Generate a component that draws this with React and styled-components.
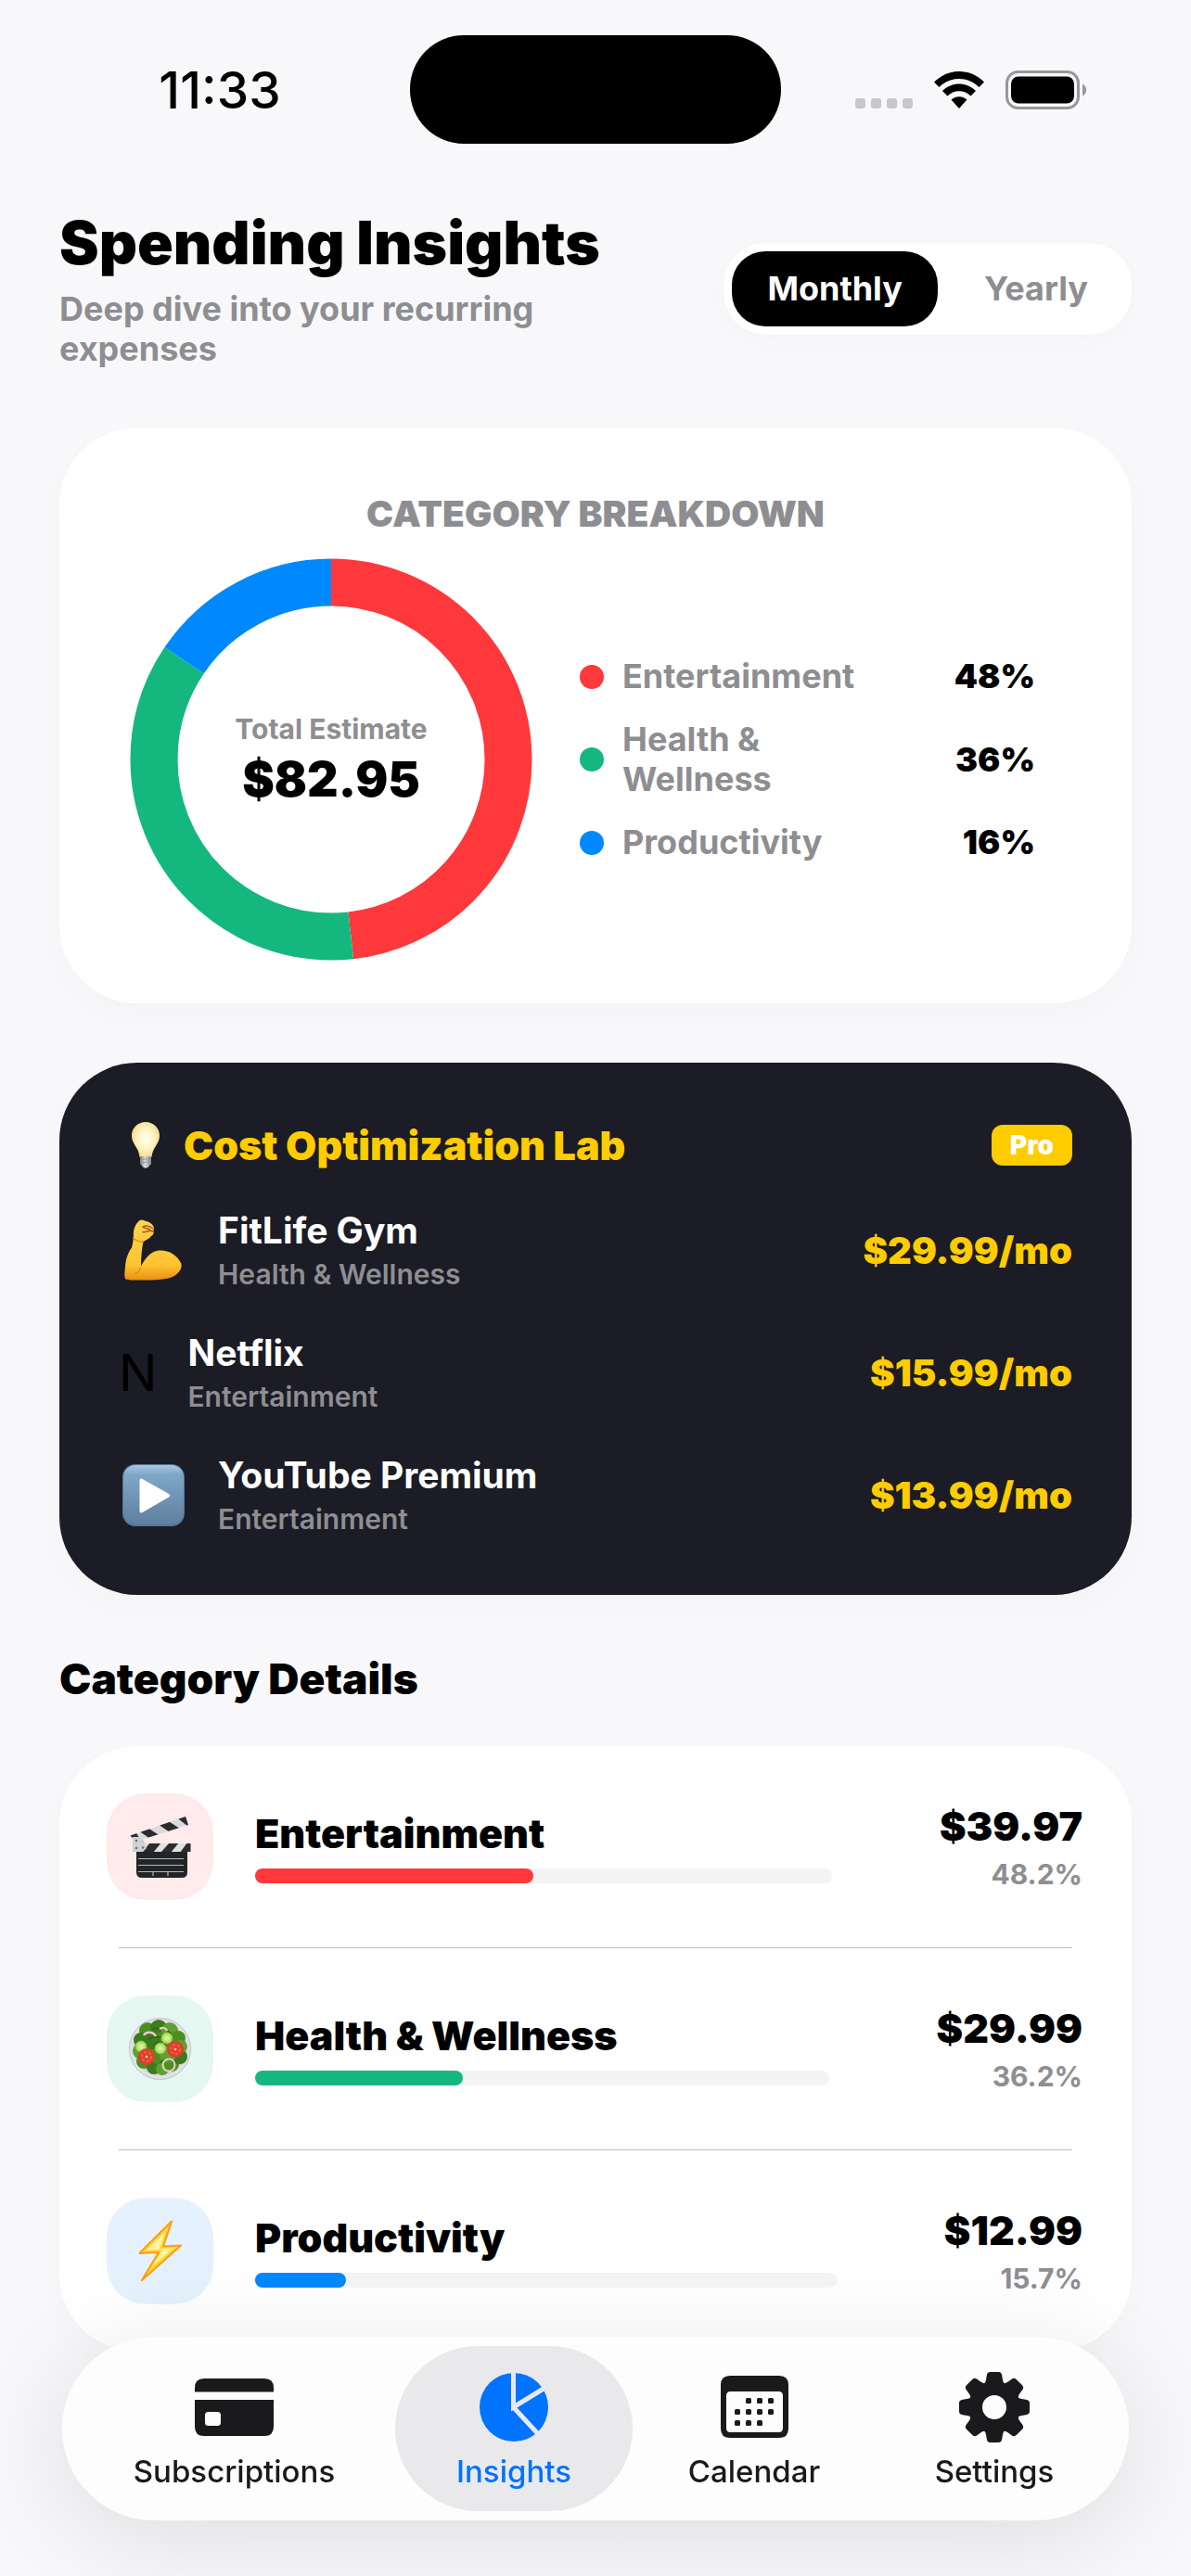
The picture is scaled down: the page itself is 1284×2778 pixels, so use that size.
import React, { useState } from 'react';
import styled, { createGlobalStyle, css } from 'styled-components';

const colors = {
    bg: '#f8f8fa',
    white: '#ffffff',
    black: '#000000',
    grey: '#8e8e92',
    line: '#bfbfc2',
    track: '#f4f4f5',
    dark: '#1b1c25',
    yellow: '#ffcc00',
    red: '#ff383c',
    green: '#14b87f',
    blue: '#0088ff',
    tabActive: '#0073ff',
    tabText: '#1a1a1c',
    pill: '#e9e9eb',
};

const setFlex = ({ x = 'center', y = 'center' } = {}) => css`
    display: flex;
    justify-content: ${x};
    align-items: ${y};
`;

const GlobalStyle = createGlobalStyle`
    *{
        box-sizing: border-box;
    }

    body{
        margin: 0;
        min-height: 100vh;
        background: ${colors.bg};
        color: ${colors.black};
        font-family: Inter, "Liberation Sans", sans-serif;
    }

    h1, h2, h3, p, ul{
        margin: 0;
        padding: 0;
    }

    ul{
        list-style: none;
    }

    svg{
        display: block;
        flex: none;
    }
`;

/* ---------- data ---------- */

const categories = [
    { name: 'Entertainment', amount: '$39.97', percent: 48.2, color: colors.red, tint: '#ffebec', icon: 'clapper' },
    { name: 'Health & Wellness', amount: '$29.99', percent: 36.2, color: colors.green, tint: '#e6f7f1', icon: 'salad' },
    { name: 'Productivity', amount: '$12.99', percent: 15.7, color: colors.blue, tint: '#e5f2fe', icon: 'bolt' },
];

const costs = [
    { name: 'FitLife Gym', category: 'Health & Wellness', price: '$29.99/mo', icon: 'arm' },
    { name: 'Netflix', category: 'Entertainment', price: '$15.99/mo', letter: 'N' },
    { name: 'YouTube Premium', category: 'Entertainment', price: '$13.99/mo', icon: 'play' },
];

/* ---------- pictograms ---------- */

const Bulb = () => (
    <svg width="30" height="50" viewBox="0 0 30 50" aria-hidden="true">
        <defs>
            <radialGradient id="glass" cx="50%" cy="48%" r="55%">
                <stop offset="0" stopColor="#fffef2" />
                <stop offset="0.5" stopColor="#fff4c4" />
                <stop offset="1" stopColor="#f3d98a" />
            </radialGradient>
            <linearGradient id="cap" x1="0" x2="1" y1="0" y2="0">
                <stop offset="0" stopColor="#7c7c7c" />
                <stop offset="0.45" stopColor="#dcdcdc" />
                <stop offset="1" stopColor="#858585" />
            </linearGradient>
        </defs>
        <path d="M15 0C6.500 0 0 6.500 0 14.500C0 20 2.600 23.500 5 27.500C7.400 31.500 8 34 8.600 38H21.400C22 34 22.600 31.500 25 27.500C27.400 23.500 30 20 30 14.500C30 6.500 23.500 0 15 0Z" fill="url(#glass)" />
        <path d="M9 37H21V45L18 48.500C17 50 13 50 12 48.500L9 45Z" fill="url(#cap)" />
        <path d="M9 40.500L21 39.500M9 43.800L21 42.800" stroke="#8a8a8a" strokeWidth="0.8" />
    </svg>
);

const Arm = () => (
    <svg width="62" height="66" viewBox="0 0 62 66" aria-hidden="true">
        <defs>
            <linearGradient id="skin" x1="0" x2="0" y1="0" y2="1">
                <stop offset="0" stopColor="#ffd352" />
                <stop offset="0.75" stopColor="#ffc32f" />
                <stop offset="1" stopColor="#e98f12" />
            </linearGradient>
        </defs>
        <path d="M16 1.500C18.500 -0.500 21 0.500 23 2C26 2 30 4.500 31.500 7.500C32.500 9.500 31 11 31.500 13C32 15 31 17 29 18C27 21 23 22.500 20.500 24C19 31 18 40 18 50.500C22 43 28 34.500 37 33.500C47 32.500 57 38 61 47C63 52 60 57 54 61C48 64.500 36 65.500 24 65.500C15 65.500 7 66 1.500 64.500C-0.500 62 0.500 57 1 51C1.800 42 4 36 8 30.500C9 27 9.500 23 10 19C9.500 15 10 11 11.500 8C12.500 5 14 3.500 16 1.500Z" fill="url(#skin)" />
        <path d="M17.500 52C17 56 14 57.500 11.500 58.500M9.500 20C13 23.500 17 24.500 21 23.500" fill="none" stroke="#dd9218" strokeWidth="1.500" strokeLinecap="round" />
        <path d="M20 8C23 6.500 27 7 30.500 9.500M20.500 8.500C22 10 26 9.500 28 11.500M20 13.500C23 14.500 25 12 27 12.500M27.500 12L31 13" fill="none" stroke="#a85a10" strokeWidth="1.500" strokeLinecap="round" />
    </svg>
);

const Play = () => (
    <svg width="67" height="67" viewBox="0 0 67 67" aria-hidden="true">
        <defs>
            <linearGradient id="tile" x1="0" x2="0" y1="0" y2="1">
                <stop offset="0" stopColor="#a9c9e2" />
                <stop offset="0.16" stopColor="#7fa6c8" />
                <stop offset="1" stopColor="#5f7f9e" />
            </linearGradient>
        </defs>
        <rect width="67" height="67" rx="14" fill="#557694" />
        <rect x="1" y="1" width="65" height="64" rx="13" fill="url(#tile)" />
        <path d="M18.500 17.500C18.500 15.600 20 15 21.600 16L50 32C51.600 33 51.600 34.600 50 35.600L21.600 52C20 53 18.500 52.400 18.500 50.500Z" fill="#fff" />
    </svg>
);

const Clapper = () => (
    <svg width="66" height="66" viewBox="0 0 66 66" aria-hidden="true">
        <defs>
            <clipPath id="upper"><path d="M0.500 20.500L60 0L63 9L6 27Z" /></clipPath>
            <clipPath id="lower"><path d="M4 29H65.500V38H4Z" /></clipPath>
        </defs>
        <path d="M3 26L12 22L18 31L14 38H3Z" fill="#c4c7ca" />
        <g clipPath="url(#upper)">
            <rect width="66" height="30" fill="#d9dbdd" />
            <path d="M-2 18L6 16L13 28L2 30ZM9 15L19 12L33 21L22 24ZM30 8L40 4L54 13L43 17ZM49 0L62 -4L68 10L62 10Z" fill="#2b2c2e" />
        </g>
        <path d="M7 37H62V60Q62 66 56 66H13Q7 66 7 60Z" fill="#232425" />
        <g clipPath="url(#lower)">
            <rect x="3" y="28" width="63" height="11" fill="#dfe0e1" />
            <path d="M3 28H8L3 38ZM22 28H34L25 39H13ZM43 28H53L44 39H33ZM62 28H68V39H54Z" fill="#2b2c2e" />
        </g>
        <path d="M3 22V38H14L18 34L10 22Z" fill="#cfd2d4" />
        <circle cx="7" cy="26" r="1.300" fill="#6b6e70" />
        <circle cx="7" cy="34" r="1.300" fill="#6b6e70" />
        <circle cx="14" cy="33.500" r="1.300" fill="#6b6e70" />
        <path d="M9 45.500H58M9 52.500H58M9 59.500H58M25 60V64M41 60V64" stroke="#b5b7b8" strokeWidth="1.200" />
    </svg>
);

const leaves = [
    [20, 14, 9], [32, 11, 9], [44, 14, 9], [53, 22, 8], [13, 24, 8], [12, 36, 8], [16, 47, 8],
    [27, 53, 8], [36, 55, 7], [46, 50, 8], [55, 42, 8], [56, 31, 7], [33, 33, 17], [25, 25, 9], [42, 40, 9],
];

const Salad = () => (
    <svg width="67" height="67" viewBox="0 0 67 67" aria-hidden="true">
        <circle cx="33.500" cy="33.500" r="33" fill="#dfe3e6" stroke="#bcc1c4" />
        <circle cx="33.500" cy="33.500" r="29" fill="#cfd5d8" />
        {leaves.map(([cx, cy, r], i) => (
            <circle key={i} cx={cx} cy={cy} r={r} fill={['#4b8f22', '#3c7a1b', '#5ca22c'][i % 3]} />
        ))}
        <path d="M20 24C28 18 38 20 42 28M34 48C38 44 46 44 50 50M26 12C34 10 42 12 46 18M26 30C30 26 36 24 40 30" fill="none" stroke="#2f6713" strokeWidth="1.500" />
        <path d="M16 19C18 15 26 14 29 20M33 12C36 10 40 11 41 14" fill="none" stroke="#eec4cf" strokeWidth="2.500" />
        {[[13, 31], [34, 33], [41, 22]].map(([cx, cy]) => (
            <g key={cx}>
                <circle cx={cx} cy={cy} r="6" fill="#b4e06c" stroke="#7fbf3a" />
                <circle cx={cx} cy={cy} r="3" fill="#d3f099" />
            </g>
        ))}
        {[[19, 42, 9], [50, 34, 9]].map(([cx, cy, r]) => (
            <g key={cx}>
                <circle cx={cx} cy={cy} r={r} fill="#df3f2a" />
                <circle cx={cx} cy={cy} r={r - 4} fill="none" stroke="#ec6547" strokeWidth="2" strokeDasharray="3 2" />
                <circle cx={cx} cy={cy} r="1.300" fill="#ffcfae" />
            </g>
        ))}
        <circle cx="43" cy="51" r="6.500" fill="none" stroke="#ecd0d2" strokeWidth="2" />
    </svg>
);

const Bolt = () => (
    <svg width="48" height="67" viewBox="0 0 48 67" aria-hidden="true">
        <path d="M36 1.500L1.500 35.800L22 35L4 65L46 27.500L27 28.500Z" fill="#ffd93b" stroke="#ff9d16" strokeWidth="2.200" strokeLinejoin="round" />
        <path d="M29 13L9 32.500L27 31.500L15 50L38 30.500L22.500 31.500Z" fill="#fff3a6" />
    </svg>
);

const pictograms = { bulb: Bulb, arm: Arm, play: Play, clapper: Clapper, salad: Salad, bolt: Bolt };

const WifiIcon = () => (
    <svg width="54" height="40" viewBox="0 0 54 40" aria-hidden="true">
        <path d="M0 11.500C15 -3.800 39 -3.800 54 11.500L48.500 17C36.500 5 17.500 5 5.500 17Z" />
        <path d="M9 21C19 11 35 11 45 21L39.500 26.500C32.500 19.500 21.500 19.500 14.500 26.500Z" />
        <path d="M18.500 30.500C23.500 26 30.500 26 35.500 30.500L27 40Z" />
    </svg>
);

const BatteryIcon = () => (
    <svg width="88" height="42" viewBox="0 0 88 42" aria-hidden="true">
        <rect x="1.500" y="1.500" width="77" height="39" rx="12" fill="none" stroke="#98989a" strokeWidth="3" />
        <rect x="6" y="6.500" width="68" height="29" rx="8" />
        <path d="M83 14.500C88.500 17 88.500 25 83 27.500Z" fill="#98989a" />
    </svg>
);

const SignalDots = () => (
    <svg width="62" height="11" viewBox="0 0 62 11" fill="#c7c7c9" aria-hidden="true">
        {[0, 17, 34, 51].map((x) => <rect key={x} x={x} width="11" height="11" rx="3" />)}
    </svg>
);

const CardIcon = () => (
    <svg width="85" height="76" viewBox="0 0 85 76" fill="currentColor" aria-hidden="true">
        <path d="M0 21.500V17Q0 7 10 7H75Q85 7 85 17V21.500Z" />
        <path fillRule="evenodd" d="M0 30H85V59Q85 69 75 69H10Q0 69 0 59ZM14.500 43Q11 43 11 46.500V54.500Q11 58 14.500 58H24.500Q28 58 28 54.500V46.500Q28 43 24.500 43Z" />
    </svg>
);

const PieIcon = () => (
    <svg width="76" height="76" viewBox="0 0 76 76" aria-hidden="true">
        <circle cx="38" cy="38" r="37" fill="currentColor" />
        <path d="M37.500 0V38L74 15.500M37.500 38L67 70" fill="none" stroke={colors.pill} strokeWidth="5" />
    </svg>
);

const calendarDots = [[30, 27], [42, 27], [54, 27], [18, 39], [30, 39], [42, 39], [54, 39], [18, 51], [30, 51], [42, 51]];

const CalendarIcon = () => (
    <svg width="73" height="76" viewBox="0 -4 73 76" fill="currentColor" aria-hidden="true">
        <path fillRule="evenodd" d="M10 0H63Q73 0 73 10V57Q73 67 63 67H10Q0 67 0 57V10Q0 0 10 0ZM10.500 17Q6 17 6 21.500V56.500Q6 61 10.500 61H62.500Q67 61 67 56.500V21.500Q67 17 62.500 17Z" />
        {calendarDots.map(([x, y]) => <rect key={`${x}-${y}`} x={x - 3} y={y - 3} width="6" height="6" rx="1.500" />)}
    </svg>
);

const GearIcon = () => (
    <svg width="76" height="76" viewBox="-38 -38 76 76" fill="currentColor" aria-hidden="true">
        <circle r="20.500" fill="none" stroke="currentColor" strokeWidth="15" />
        {[0, 45, 90, 135, 180, 225, 270, 315].map((a) => (
            <path key={a} transform={`rotate(${a})`} d="M-11 -25Q-9 -27 -8.300 -34Q-7.800 -38 -4.500 -38H4.500Q7.800 -38 8.300 -34Q9 -27 11 -25Z" />
        ))}
    </svg>
);

const tabs = [
    { label: 'Subscriptions', Icon: CardIcon },
    { label: 'Insights', Icon: PieIcon },
    { label: 'Calendar', Icon: CalendarIcon },
    { label: 'Settings', Icon: GearIcon },
];

/* ---------- status bar ---------- */

const StatusBar = styled.header`
    display: grid;
    grid-template-columns: 1fr 400px 1fr;
    padding-top: 38px;
    height: 155px;
`;

const Clock = styled.div`
    ${setFlex()};
    padding-left: 32px;
    font-size: 55px;
    font-weight: 500;
`;

const Island = styled.div`
    background: ${colors.black};
    border-radius: 58px;
`;

const StatusIcons = styled.div`
    ${setFlex()};
    gap: 23px;
    padding-right: 33px;
`;

const Signal = styled.span`
    ${setFlex({ y: 'flex-end' })};
    height: 40px;
`;

/* ---------- page head ---------- */

const Page = styled.main`
    padding: 69px 64px 220px;
`;

const PageHead = styled.div`
    ${setFlex({ x: 'space-between' })};
    gap: 40px;
    margin-bottom: 63px;
`;

const Title = styled.h1`
    font-size: 64px;
    font-weight: 900;
    line-height: 76px;
    white-space: nowrap;
`;

const Subtitle = styled.p`
    margin-top: 12px;
    max-width: 600px;
    font-size: 36px;
    font-weight: 700;
    line-height: 43px;
    color: ${colors.grey};
`;

const Segment = styled.div`
    display: flex;
    flex: none;
    gap: 12px;
    padding: 9px;
    background: ${colors.white};
    border-radius: 46px;
    box-shadow: 0 6px 24px rgba(0, 0, 0, 0.02);
`;

const SegmentButton = styled.button`
    border: 0;
    padding: 0 38px;
    height: 81px;
    border-radius: 36px;
    font: 700 36px Inter, "Liberation Sans", sans-serif;
    cursor: pointer;
    background: ${({ $active }) => ($active ? colors.black : 'transparent')};
    color: ${({ $active }) => ($active ? colors.white : colors.grey)};
`;

/* ---------- cards ---------- */

const Card = styled.section`
    background: ${({ $dark }) => ($dark ? colors.dark : colors.white)};
    border-radius: 84px;
    box-shadow: 0 12px 36px rgba(0, 0, 0, 0.02);
`;

const BreakdownCard = styled(Card)`
    padding: 69px 76px 46px;
    margin-bottom: 64px;
`;

const BreakdownTitle = styled.h2`
    margin-bottom: 24px;
    font-size: 39px;
    font-weight: 900;
    line-height: 48px;
    text-align: center;
    text-transform: uppercase;
    color: ${colors.grey};
`;

const ChartRow = styled.div`
    ${setFlex({ x: 'flex-start' })};
    gap: 51px;
`;

const ChartBox = styled.div`
    display: grid;
    place-items: center;
    flex: none;

    > *{
        grid-area: 1 / 1;
    }
`;

const Total = styled.div`
    text-align: center;
`;

const TotalLabel = styled.p`
    font-size: 30px;
    font-weight: 700;
    line-height: 43px;
    color: ${colors.grey};
`;

const TotalValue = styled.p`
    font-size: 52px;
    font-weight: 900;
    line-height: 66px;
`;

const Legend = styled.ul`
    flex: 1;
    display: flex;
    flex-direction: column;
    gap: 25px;
    padding-right: 28px;
`;

const LegendItem = styled.li`
    display: grid;
    grid-template-columns: 26px 264px 1fr;
    align-items: center;
    column-gap: 20px;
    font-size: 36px;
    font-weight: 700;
    line-height: 43px;
    color: ${colors.grey};
`;

const Dot = styled.span`
    height: 26px;
    border-radius: 50%;
    background: ${({ $color }) => $color};
`;

const LegendValue = styled.span`
    text-align: right;
    font-weight: 900;
    color: ${colors.black};
`;

/* ---------- cost lab ---------- */

const LabCard = styled(Card)`
    display: flex;
    flex-direction: column;
    gap: 44px;
    padding: 64px;
`;

const LabHead = styled.div`
    ${setFlex({ x: 'space-between' })};
    height: 50px;
`;

const LabTitle = styled.h2`
    ${setFlex()};
    gap: 12px;
    font-size: 43px;
    font-weight: 900;
    color: ${colors.yellow};
`;

const BulbBox = styled.span`
    ${setFlex()};
    width: 58px;
`;

const Badge = styled.span`
    padding: 0 20px;
    border-radius: 12px;
    background: ${colors.yellow};
    color: ${colors.white};
    font-size: 28px;
    font-weight: 900;
    line-height: 44px;
`;

const CostRow = styled.div`
    ${setFlex({ x: 'flex-start' })};
    gap: 33px;
`;

const CostIcon = styled.span`
    ${setFlex()};
    width: 74px;
`;

const CostLetter = styled.span`
    font-size: 55px;
    line-height: 66px;
    color: ${colors.black};
`;

const CostText = styled.div`
    flex: 1;
    display: flex;
    flex-direction: column;
    gap: 6px;
`;

const CostName = styled.h3`
    font-size: 39px;
    font-weight: 700;
    line-height: 46px;
    color: ${colors.white};
`;

const CostCategory = styled.p`
    font-size: 30px;
    font-weight: 600;
    line-height: 36px;
    color: ${colors.grey};
`;

const CostPrice = styled.span`
    font-size: 40px;
    font-weight: 900;
    color: ${colors.yellow};
`;

/* ---------- category details ---------- */

const SectionTitle = styled.h2`
    margin: 63px 0 46px;
    font-size: 46px;
    font-weight: 900;
    line-height: 54px;
`;

const DetailRow = styled.div`
    ${setFlex({ x: 'flex-start' })};
    padding: 51px 53px 51px 51px;
`;

const Divider = styled.hr`
    height: 1px;
    margin: 0 64px;
    border: 0;
    background: ${colors.line};
`;

const IconTile = styled.span`
    ${setFlex()};
    flex: none;
    width: 115px;
    height: 115px;
    border-radius: 42px;
    background: ${({ $tint }) => $tint};
`;

const DetailBody = styled.div`
    flex: 1;
    margin: 0 116px 0 45px;
`;

const DetailName = styled.h3`
    margin-bottom: 14px;
    font-size: 43px;
    font-weight: 900;
    line-height: 48px;
`;

const Track = styled.div`
    height: 16px;
    border-radius: 8px;
    background: ${colors.track};
`;

const Fill = styled.div`
    height: 100%;
    border-radius: 8px;
    background: ${({ $color }) => $color};
`;

const DetailNumbers = styled.div`
    display: flex;
    flex-direction: column;
    gap: 10px;
    text-align: right;
`;

const Amount = styled.span`
    font-size: 43px;
    font-weight: 900;
    line-height: 48px;
`;

const Percent = styled.span`
    font-size: 30px;
    font-weight: 700;
    line-height: 36px;
    color: ${colors.grey};
`;

/* ---------- tab bar ---------- */

const TabBar = styled.nav`
    position: fixed;
    left: 67px;
    right: 67px;
    bottom: 60px;
    display: grid;
    grid-template-columns: 341fr 256fr 256fr 256fr;
    column-gap: 3px;
    padding: 10px 17px 10px 15px;
    border-radius: 99px;
    background: #fdfdfe;
    box-shadow: 0 18px 110px rgba(0, 0, 0, 0.11);
`;

const Tab = styled.a`
    ${setFlex()};
    flex-direction: column;
    gap: 12px;
    height: 178px;
    padding-top: 4px;
    border-radius: 89px;
    font-size: 33px;
    font-weight: 500;
    line-height: 38px;
    text-decoration: none;
    color: ${({ $active }) => ($active ? colors.tabActive : colors.tabText)};
    background: ${({ $active }) => ($active ? colors.pill : 'transparent')};
`;

/* ---------- parts ---------- */

const RADIUS = 191;
const LENGTH = 2 * Math.PI * RADIUS;

const Donut = () => {
    let start = 0;
    return (
        <svg width="434" height="434" viewBox="0 0 434 434" role="img" aria-label="Category breakdown">
            <g transform="rotate(-90 217 217)" fill="none" strokeWidth="51">
                {categories.map(({ name, percent, color }) => {
                    const offset = start;
                    start += percent;
                    return (
                        <circle
                            key={name}
                            cx="217"
                            cy="217"
                            r={RADIUS}
                            stroke={color}
                            strokeDasharray={`${(percent / 100) * LENGTH} ${LENGTH}`}
                            strokeDashoffset={(-offset / 100) * LENGTH}
                        />
                    );
                })}
            </g>
        </svg>
    );
};

const Pictogram = ({ name }) => {
    const Drawing = pictograms[name];
    return <Drawing />;
};

const Breakdown = () => (
    <BreakdownCard>
        <BreakdownTitle>Category Breakdown</BreakdownTitle>
        <ChartRow>
            <ChartBox>
                <Donut />
                <Total>
                    <TotalLabel>Total Estimate</TotalLabel>
                    <TotalValue>$82.95</TotalValue>
                </Total>
            </ChartBox>
            <Legend>
                {categories.map(({ name, percent, color }) => (
                    <LegendItem key={name}>
                        <Dot $color={color} />
                        <span>{name}</span>
                        <LegendValue>{Math.round(percent)}%</LegendValue>
                    </LegendItem>
                ))}
            </Legend>
        </ChartRow>
    </BreakdownCard>
);

const CostLab = () => (
    <LabCard $dark>
        <LabHead>
            <LabTitle>
                <BulbBox><Pictogram name="bulb" /></BulbBox>
                Cost Optimization Lab
            </LabTitle>
            <Badge>Pro</Badge>
        </LabHead>
        {costs.map(({ name, category, price, icon, letter }) => (
            <CostRow key={name}>
                {icon ? <CostIcon><Pictogram name={icon} /></CostIcon> : <CostLetter>{letter}</CostLetter>}
                <CostText>
                    <CostName>{name}</CostName>
                    <CostCategory>{category}</CostCategory>
                </CostText>
                <CostPrice>{price}</CostPrice>
            </CostRow>
        ))}
    </LabCard>
);

const Details = () => (
    <Card>
        {categories.map(({ name, amount, percent, color, tint, icon }, i) => (
            <React.Fragment key={name}>
                {i > 0 && <Divider />}
                <DetailRow>
                    <IconTile $tint={tint}><Pictogram name={icon} /></IconTile>
                    <DetailBody>
                        <DetailName>{name}</DetailName>
                        <Track>
                            <Fill $color={color} style={{ width: `${percent}%` }} />
                        </Track>
                    </DetailBody>
                    <DetailNumbers>
                        <Amount>{amount}</Amount>
                        <Percent>{percent}%</Percent>
                    </DetailNumbers>
                </DetailRow>
            </React.Fragment>
        ))}
    </Card>
);

const App = () => {
    const [period, setPeriod] = useState('Monthly');
    const [tab, setTab] = useState('Insights');

    return (
        <>
            <GlobalStyle />
            <StatusBar>
                <Clock>11:33</Clock>
                <Island />
                <StatusIcons>
                    <Signal><SignalDots /></Signal>
                    <WifiIcon />
                    <BatteryIcon />
                </StatusIcons>
            </StatusBar>
            <Page>
                <PageHead>
                    <div>
                        <Title>Spending Insights</Title>
                        <Subtitle>Deep dive into your recurring expenses</Subtitle>
                    </div>
                    <Segment>
                        {['Monthly', 'Yearly'].map((item) => (
                            <SegmentButton
                                key={item}
                                type="button"
                                aria-pressed={period === item}
                                $active={period === item}
                                onClick={() => setPeriod(item)}
                            >
                                {item}
                            </SegmentButton>
                        ))}
                    </Segment>
                </PageHead>
                <Breakdown />
                <CostLab />
                <SectionTitle>Category Details</SectionTitle>
                <Details />
            </Page>
            <TabBar>
                {tabs.map(({ label, Icon }) => (
                    <Tab key={label} href={`#${label.toLowerCase()}`} $active={tab === label} onClick={() => setTab(label)}>
                        <Icon />
                        {label}
                    </Tab>
                ))}
            </TabBar>
        </>
    );
};

export default App;
